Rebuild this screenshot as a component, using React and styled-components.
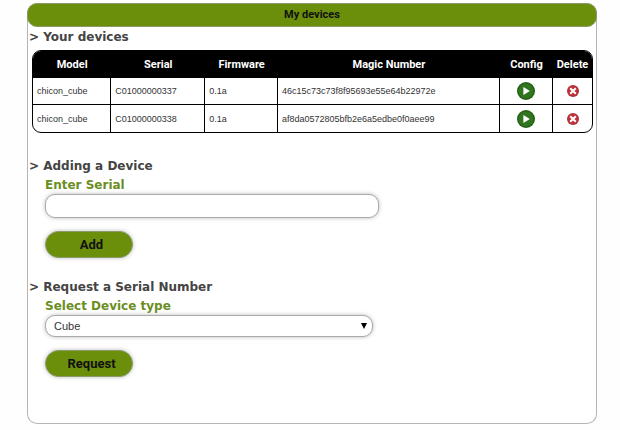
import React, { useState } from "react";
import styled, { createGlobalStyle } from "styled-components";

const devices = [
  {
    model: "chicon_cube",
    serial: "C01000000337",
    firmware: "0.1a",
    magic: "46c15c73c73f8f95693e55e64b22972e",
  },
  {
    model: "chicon_cube",
    serial: "C01000000338",
    firmware: "0.1a",
    magic: "af8da0572805bfb2e6a5edbe0f0aee99",
  },
];

const ConfigIcon = () => (
  <svg width="18" height="18" viewBox="0 0 18 18" aria-hidden="true">
    <circle cx="9" cy="9" r="9" fill="#236016" />
    <circle cx="9" cy="9" r="7.6" fill="#32751f" />
    <path d="M6.4 5 12.8 9l-6.4 4z" fill="#fff" />
  </svg>
);

const DeleteIcon = () => (
  <svg width="12" height="12" viewBox="0 0 12 12" aria-hidden="true">
    <circle cx="6" cy="6" r="6" fill="#a8323a" />
    <circle cx="6" cy="6" r="5" fill="#c2303a" />
    <path d="m3.2 3.2 5.6 5.6m0-5.6L3.2 8.8" stroke="#fff" strokeWidth="2" />
  </svg>
);

const App = () => {
  const [serial, setSerial] = useState("");
  const [type, setType] = useState("cube");

  return (
    <>
      <GlobalStyle />
      <Panel>
        <PanelTitle>My devices</PanelTitle>

        <Section>
          <Heading>&gt; Your devices</Heading>
          <TableFrame>
            <Table>
              <thead>
                <tr>
                  <Th $width="14%">Model</Th>
                  <Th $width="94px">Serial</Th>
                  <Th $width="13%">Firmware</Th>
                  <Th>Magic Number</Th>
                  <Th $width="53px">Config</Th>
                  <Th $width="39px">Delete</Th>
                </tr>
              </thead>
              <tbody>
                {devices.map((device) => (
                  <tr key={device.serial}>
                    <Td>{device.model}</Td>
                    <Td>{device.serial}</Td>
                    <Td>{device.firmware}</Td>
                    <Td>{device.magic}</Td>
                    <Td $center>
                      <IconButton type="button" aria-label={`Config ${device.serial}`}>
                        <ConfigIcon />
                      </IconButton>
                    </Td>
                    <Td $center>
                      <IconButton type="button" aria-label={`Delete ${device.serial}`}>
                        <DeleteIcon />
                      </IconButton>
                    </Td>
                  </tr>
                ))}
              </tbody>
            </Table>
          </TableFrame>
        </Section>

        <Section $gap="23px">
          <Heading>&gt; Adding a Device</Heading>
          <Form onSubmit={(e) => e.preventDefault()}>
            <Label htmlFor="serial">Enter Serial</Label>
            <TextInput
              id="serial"
              type="text"
              value={serial}
              onChange={(e) => setSerial(e.target.value)}
            />
            <Button type="submit">Add</Button>
          </Form>
        </Section>

        <Section $gap="19px">
          <Heading>&gt; Request a Serial Number</Heading>
          <Form onSubmit={(e) => e.preventDefault()}>
            <Label htmlFor="type">Select Device type</Label>
            <SelectBox>
              <Select id="type" value={type} onChange={(e) => setType(e.target.value)}>
                <option value="cube">Cube</option>
              </Select>
              <svg width="6" height="6" viewBox="0 0 6 6" aria-hidden="true">
                <path d="M0 0h6L3 6z" fill="#000" />
              </svg>
            </SelectBox>
            <Button type="submit">Request</Button>
          </Form>
        </Section>
      </Panel>
    </>
  );
};

const GlobalStyle = createGlobalStyle`
  * {
    box-sizing: border-box;
  }
  body {
    margin: 0;
    background: #fefefe;
    font-family: "Liberation Sans", Arial, sans-serif;
  }
`;

const Panel = styled.main`
  margin: 3px 23px 6px 27px;
  padding-bottom: 46px;
  border: 1px solid #b4b4b4;
  border-top: 0;
  border-radius: 10px;
  background: #fff;
`;

const PanelTitle = styled.h1`
  margin: 0 -1px;
  border: 1px solid #8a9a68;
  border-radius: 10px;
  background: #6b8e0b;
  color: #111;
  font-family: Roboto, Arial, sans-serif;
  font-size: 11px;
  line-height: 22px;
  text-align: center;
`;

const Section = styled.section`
  margin-top: ${({ $gap }) => $gap || "0"};
`;

const Heading = styled.h2`
  margin: 0;
  padding-left: 1px;
  color: #444;
  font-family: "DejaVu Sans", Verdana, sans-serif;
  font-size: 12px;
  line-height: 20px;
`;

const TableFrame = styled.div`
  margin: 3px 3px 0 4px;
  border: 1px solid #000;
  border-radius: 9px;
  overflow: hidden;
`;

const Table = styled.table`
  width: 100%;
  table-layout: fixed;
  border-collapse: separate;
  border-spacing: 0;

  tbody tr:last-child td {
    border-bottom: 0;
  }
`;

const Th = styled.th`
  width: ${({ $width }) => $width || "auto"};
  height: 27px;
  padding: 0;
  background: #000;
  color: #fff;
  font-family: Roboto, Arial, sans-serif;
  font-size: 11px;
`;

const Td = styled.td`
  height: 27px;
  padding: ${({ $center }) => ($center ? "0" : "0 0 0 4px")};
  border-right: 1px solid #000;
  border-bottom: 1px solid #000;
  color: #333;
  font-size: 9px;
  text-align: ${({ $center }) => ($center ? "center" : "left")};

  &:last-child {
    border-right: 0;
  }
`;

const IconButton = styled.button`
  padding: 0;
  border: 0;
  background: none;
  vertical-align: middle;
  cursor: pointer;

  svg {
    display: block;
  }
`;

const Form = styled.form`
  display: flex;
  flex-direction: column;
  align-items: flex-start;
  padding-left: 17px;
`;

const Label = styled.label`
  color: #6b8e23;
  font-family: "DejaVu Sans", Verdana, sans-serif;
  font-size: 12px;
  font-weight: bold;
  line-height: 18px;
`;

const TextInput = styled.input`
  width: 334px;
  max-width: 100%;
  height: 24px;
  padding: 0 8px;
  border: 1px solid #aaa;
  border-radius: 10px;
  background: #fff;
  box-shadow: 0 0 4px #bbb;
  font-size: 11px;
`;

const SelectBox = styled.div`
  position: relative;
  width: 328px;
  max-width: 100%;

  svg {
    position: absolute;
    top: 8px;
    right: 6px;
    pointer-events: none;
  }
`;

const Select = styled.select`
  display: block;
  width: 100%;
  height: 22px;
  padding: 0 8px;
  appearance: none;
  border: 1px solid #aaa;
  border-radius: 10px;
  background: #fff;
  box-shadow: 0 0 4px #bbb;
  color: #333;
  font-family: inherit;
  font-size: 11px;
`;

const Button = styled.button`
  width: 88px;
  height: 27px;
  margin-top: 13px;
  padding: 0 0 0 5px;
  border: 1px solid #8a9a68;
  border-radius: 14px;
  background: #6b8e0b;
  box-shadow: 0 0 4px #bbb;
  color: #111;
  font-family: Roboto, Arial, sans-serif;
  font-size: 13px;
  font-weight: bold;
  cursor: pointer;
`;

export default App;
